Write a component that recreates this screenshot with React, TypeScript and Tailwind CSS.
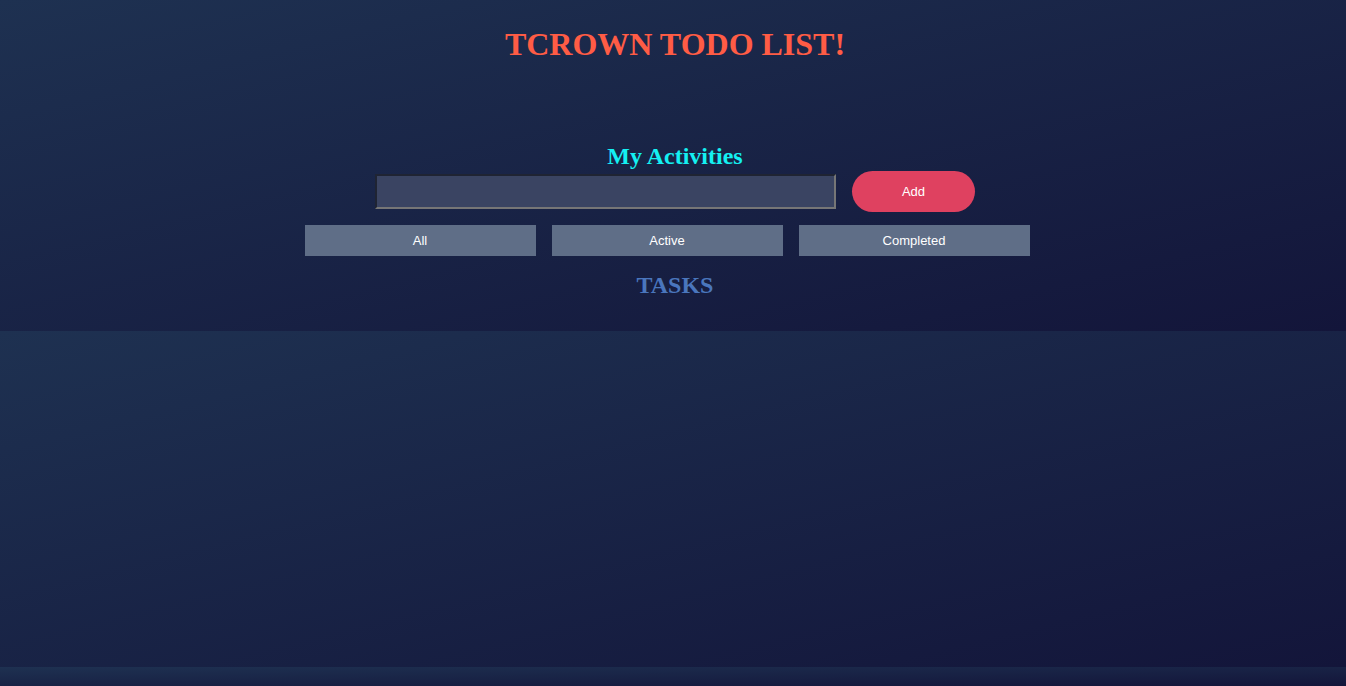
const filters = ['All', 'Active', 'Completed'];

const tile = 'bg-[linear-gradient(to_bottom_right,#1e3151,#13153a)]';

export default function App() {
  return (
    <div className="min-h-screen w-full bg-[#13153a]">
      <div className={`h-[331px] w-full ${tile}`}>
        <div className="flex flex-col items-center pl-[4px] pt-[26px]">
          <h1 className="font-['Liberation_Serif',serif] text-[32px] font-bold leading-[37px] text-[#ff5c45]">
            TCROWN TODO LIST!
          </h1>
          <h2 className="mt-[79px] font-['Liberation_Serif',serif] text-[24px] font-bold leading-[28px] text-[#14f0f2]">
            My Activities
          </h2>
          <div className="mt-[1px] flex items-center gap-[16px]">
            <input
              type="text"
              className="h-[35px] w-[461px] border-2 border-t-[#1f2433] border-l-[#1f2433] border-b-[#767676] border-r-[#767676] bg-[#3a4462] px-2 font-['Liberation_Sans',sans-serif] text-[13px] text-white outline-none"
            />
            <button
              type="button"
              className="h-[41px] w-[123px] rounded-full bg-[#df4160] font-['Liberation_Sans',sans-serif] text-[13px] text-white"
            >
              Add
            </button>
          </div>
          <div className="mt-[13px] flex gap-[16px] pr-[16px]">
            {filters.map((f) => (
              <button
                key={f}
                type="button"
                className="h-[31px] w-[231px] bg-[#5f6e87] font-['Liberation_Sans',sans-serif] text-[13px] text-white"
              >
                {f}
              </button>
            ))}
          </div>
          <h2 className="mt-[15px] font-['Liberation_Serif',serif] text-[24px] font-bold leading-[28px] text-[#4a76bd]">
            TASKS
          </h2>
        </div>
      </div>
      <div className={`h-[336px] w-full ${tile}`} />
      <div className={`h-[19px] w-full ${tile}`} />
    </div>
  );
}
